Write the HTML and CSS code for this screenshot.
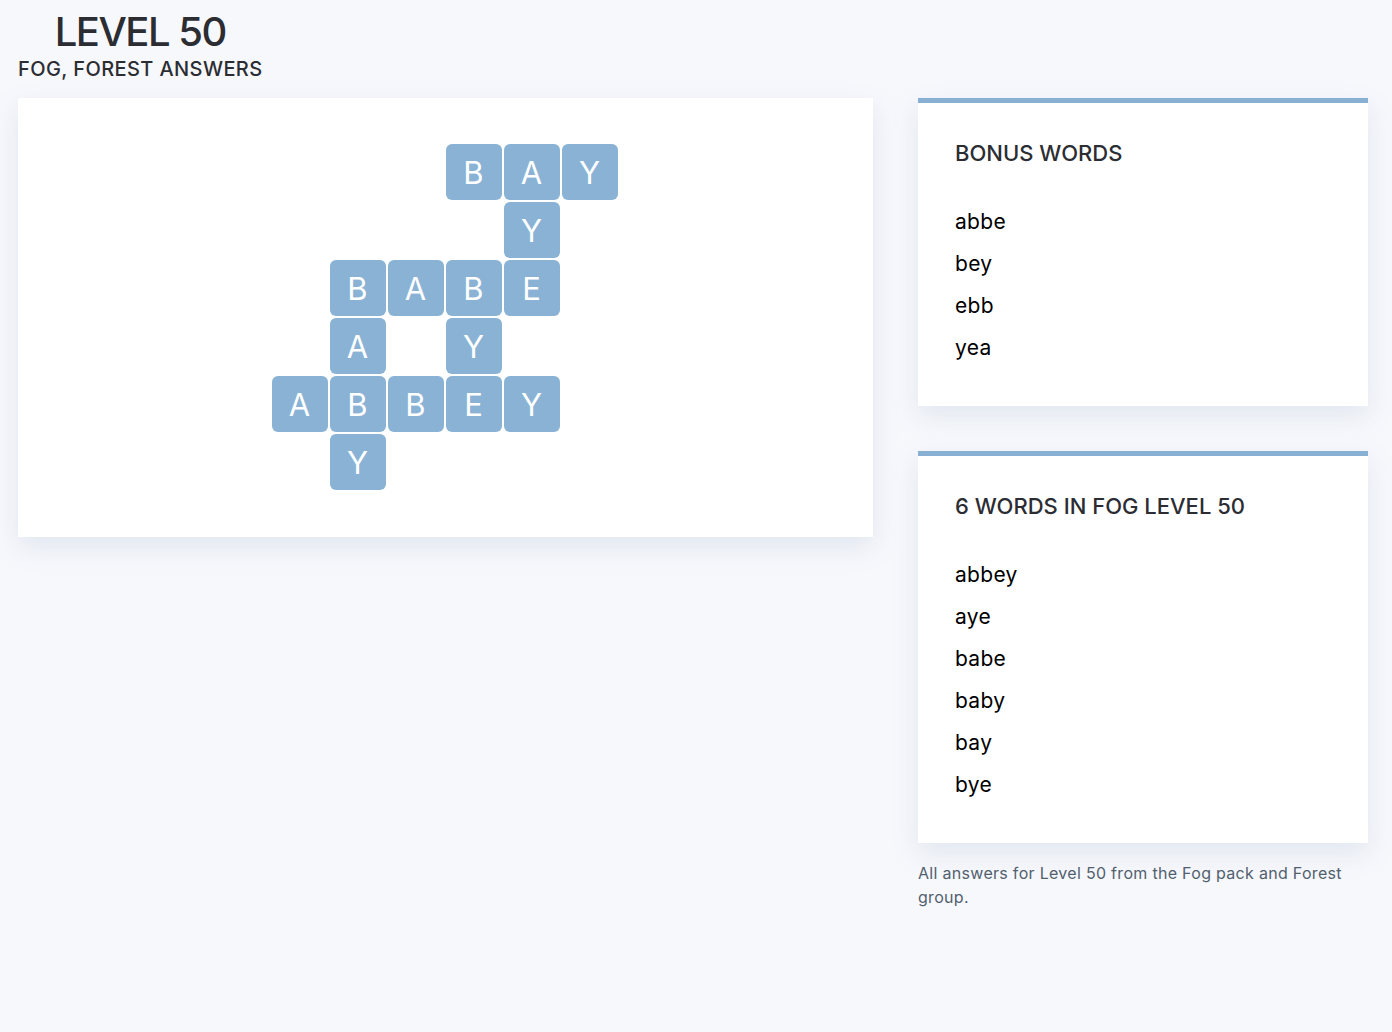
FILE: index.html
```html
<!DOCTYPE html>
<html lang="en">
<head>
<meta charset="utf-8">
<title>Level 50 - Fog, Forest Answers</title>
<link rel="stylesheet" href="styles.css">
</head>
<body>
<header class="header">
  <div class="titles">
    <h1 class="title">LEVEL 50</h1>
    <h2 class="subtitle">FOG, FOREST ANSWERS</h2>
  </div>
</header>
<main class="layout">
  <section class="board-card">
    <div class="board">
      <div class="tile r1 c4">B</div>
      <div class="tile r1 c5">A</div>
      <div class="tile r1 c6">Y</div>
      <div class="tile r2 c5">Y</div>
      <div class="tile r3 c2">B</div>
      <div class="tile r3 c3">A</div>
      <div class="tile r3 c4">B</div>
      <div class="tile r3 c5">E</div>
      <div class="tile r4 c2">A</div>
      <div class="tile r4 c4">Y</div>
      <div class="tile r5 c1">A</div>
      <div class="tile r5 c2">B</div>
      <div class="tile r5 c3">B</div>
      <div class="tile r5 c4">E</div>
      <div class="tile r5 c5">Y</div>
      <div class="tile r6 c2">Y</div>
    </div>
  </section>
  <aside class="sidebar">
    <section class="panel">
      <h3 class="panel-title">BONUS WORDS</h3>
      <ul class="words">
        <li>abbe</li>
        <li>bey</li>
        <li>ebb</li>
        <li>yea</li>
      </ul>
    </section>
    <section class="panel">
      <h3 class="panel-title">6 WORDS IN FOG LEVEL 50</h3>
      <ul class="words">
        <li>abbey</li>
        <li>aye</li>
        <li>babe</li>
        <li>baby</li>
        <li>bay</li>
        <li>bye</li>
      </ul>
    </section>
    <p class="note">All answers for Level 50 from the Fog pack and Forest group.</p>
  </aside>
</main>
</body>
</html>
```
FILE: styles.css
```css
* { box-sizing: border-box; }
html, body { margin: 0; padding: 0; }
body {
  background: #f7f8fc;
  font-family: Inter, "Noto Sans", "Liberation Sans", sans-serif;
  color: #2b2d33;
}
.header {
  padding: 8px 18px 0;
}
.titles {
  display: inline-block;
  text-align: center;
}
.title {
  margin: 0;
  font-size: 40px;
  line-height: 48px;
  font-weight: 500;
  letter-spacing: -1.5px;
  color: #2b2d33;
}
.subtitle {
  margin: 1px 0 0;
  font-size: 20px;
  line-height: 24px;
  font-weight: 500;
  letter-spacing: 0.4px;
  color: #2b2d33;
}
.layout {
  display: flex;
  align-items: flex-start;
  gap: 45px;
  padding: 17px 24px 0 18px;
}
.board-card {
  flex: 1;
  background: #fff;
  padding: 46px 2px 47px 0;
  display: flex;
  justify-content: center;
  box-shadow: 0 10px 24px rgba(200, 208, 225, 0.45);
}
.board {
  display: grid;
  grid-template-columns: repeat(6, 56px);
  grid-template-rows: repeat(6, 56px);
  gap: 2px;
}
.tile {
  background: #89b2d4;
  color: #fff;
  border-radius: 6px;
  display: flex;
  align-items: center;
  justify-content: center;
  font-size: 31px;
  font-weight: 400;
  padding-top: 1px;
}
.r1 { grid-row: 1; } .r2 { grid-row: 2; } .r3 { grid-row: 3; }
.r4 { grid-row: 4; } .r5 { grid-row: 5; } .r6 { grid-row: 6; }
.c1 { grid-column: 1; } .c2 { grid-column: 2; } .c3 { grid-column: 3; }
.c4 { grid-column: 4; } .c5 { grid-column: 5; } .c6 { grid-column: 6; }
.sidebar {
  width: 450px;
  flex: none;
  display: flex;
  flex-direction: column;
  gap: 45px;
}
.panel {
  background: #fff;
  border-top: 5px solid #88b0d2;
  padding: 36px 37px 37px;
  box-shadow: 0 10px 24px rgba(200, 208, 225, 0.45);
}
.panel-title {
  margin: 0;
  font-size: 22px;
  line-height: 28px;
  font-weight: 500;
  color: #2b2d33;
}
.words {
  list-style: none;
  margin: 34px 0 0;
  padding: 0;
}
.words li {
  font-size: 21px;
  line-height: 42px;
  letter-spacing: 0.3px;
  color: #000;
}
.note {
  margin: -27px 0 0;
  font-size: 16px;
  line-height: 24px;
  letter-spacing: 0.3px;
  color: #51606e;
}
```
